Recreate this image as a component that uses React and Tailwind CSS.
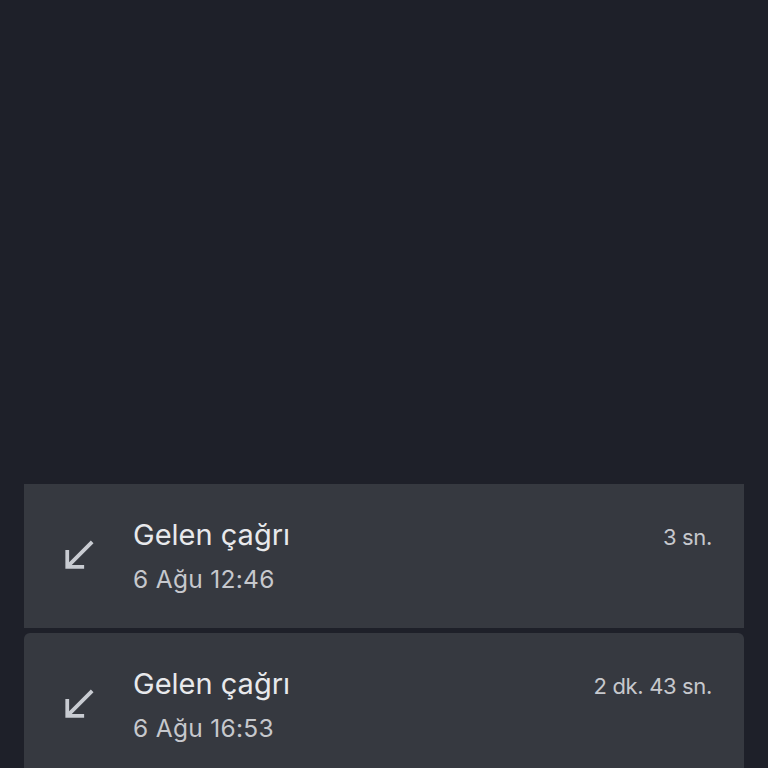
const calls = [
  { label: 'Gelen çağrı', date: '6 Ağu 12:46', duration: '3 sn.', first: true },
  { label: 'Gelen çağrı', date: '6 Ağu 16:53', duration: '2 dk. 43 sn.' },
];

function CallReceivedIcon() {
  return (
    <svg viewBox="0 0 24 24" className="w-[45px] h-[45px] shrink-0 -mt-[2px]" fill="#c9ccd2">
      <path d="M20 5.41L18.59 4 7 15.59V9H5v10h10v-2H8.41z" />
    </svg>
  );
}

function CallRow({ label, date, duration, first }) {
  return (
    <div
      className={
        'flex items-center h-[144px] bg-[#363940] pl-8 pr-8 ' +
        (first ? 'rounded-none' : 'rounded-t-[6px]')
      }
    >
      <CallReceivedIcon />
      <div className="flex-1 ml-8">
        <div className="flex items-baseline justify-between">
          <span className="text-[29px] leading-[36px] text-[#e8e9ec]">{label}</span>
          <span className="text-[22px] leading-[32px] tracking-[-0.35px] text-[#c6c8cd]">{duration}</span>
        </div>
        <div className="text-[24.5px] leading-[32px] tracking-[0.3px] mt-[10px] text-[#c6c8cd]">{date}</div>
      </div>
    </div>
  );
}

export default function App() {
  return (
    <div
      className="h-screen overflow-hidden bg-[#1e2029]"
      style={{ fontFamily: 'Inter, Roboto, "Noto Sans", sans-serif' }}
    >
      <div className="h-[484px]" />
      <div className="flex flex-col gap-[5px] px-6">
        {calls.map((c, i) => (
          <CallRow key={i} {...c} />
        ))}
      </div>
    </div>
  );
}
